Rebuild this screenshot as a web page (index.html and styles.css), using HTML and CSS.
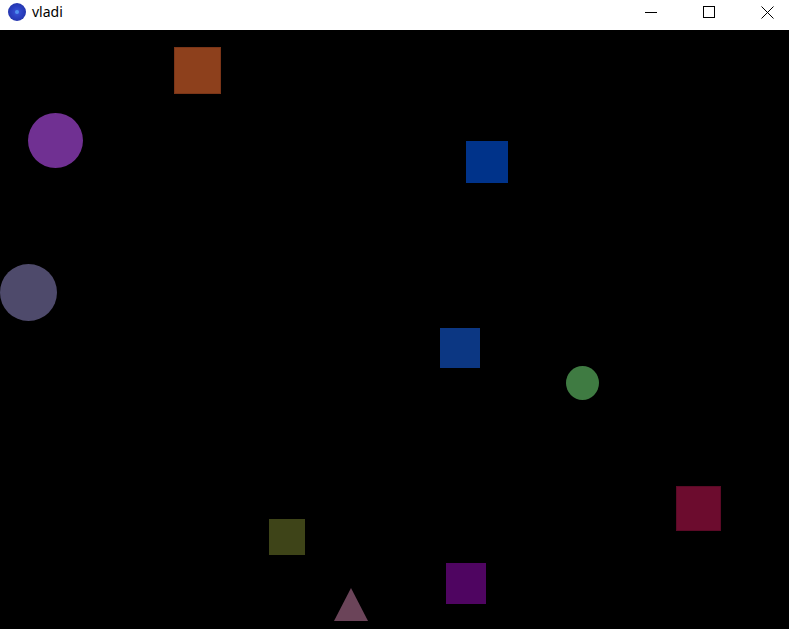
FILE: index.html
```html
<!DOCTYPE html>
<html>
<head>
<meta charset="utf-8">
<title>vladi</title>
<link rel="stylesheet" href="styles.css">
</head>
<body>
<div class="window">
  <header class="titlebar">
    <div class="app">
      <span class="app-icon"><span class="app-dot"></span></span>
      <span class="app-title">vladi</span>
    </div>
    <div class="controls">
      <span class="ctl">
        <svg width="12" height="12" viewBox="0 0 12 12"><path d="M0 6.5h12" stroke="#000" stroke-width="1"/></svg>
      </span>
      <span class="ctl">
        <svg width="12" height="12" viewBox="0 0 12 12"><rect x="0.5" y="0.5" width="11" height="11" fill="none" stroke="#000" stroke-width="1"/></svg>
      </span>
      <span class="ctl">
        <svg width="13" height="13" viewBox="0 0 13 13"><path d="M0.5 0.5L12.5 12.5M12.5 0.5L0.5 12.5" stroke="#000" stroke-width="1"/></svg>
      </span>
    </div>
  </header>
  <main class="canvas">
    <div class="shape sq orange"></div>
    <div class="shape circ purple"></div>
    <div class="shape sq blue1"></div>
    <div class="shape circ slate"></div>
    <div class="shape sq blue2"></div>
    <div class="shape circ green"></div>
    <div class="shape sq red"></div>
    <div class="shape sq olive"></div>
    <div class="shape sq violet"></div>
    <svg class="shape tri" width="34" height="33" viewBox="0 0 34 33"><polygon points="17,0 34,33 0,33" fill="#6b4459"/></svg>
  </main>
</div>
</body>
</html>
```
FILE: styles.css
```css
html, body {
  margin: 0;
  padding: 0;
  height: 100%;
  background: #000;
}
.window {
  display: flex;
  flex-direction: column;
  width: 789px;
  height: 629px;
  overflow: hidden;
}
.titlebar {
  height: 30px;
  flex: 0 0 30px;
  background: #fff;
  display: flex;
  align-items: center;
  justify-content: space-between;
}
.app {
  display: flex;
  align-items: center;
  padding-left: 8px;
  gap: 6px;
  margin-top: -6px;
}
.app-icon {
  width: 18px;
  height: 18px;
  border-radius: 50%;
  background: radial-gradient(circle at 50% 50%, #3a55d8 0, #2a3fc0 45%, #1f2c9a 100%);
  display: flex;
  align-items: center;
  justify-content: center;
}
.app-dot {
  width: 4px;
  height: 4px;
  border-radius: 50%;
  background: #4f8ff0;
}
.app-title {
  font-family: "Noto Sans", "Open Sans", sans-serif;
  font-size: 14px;
  color: #000;
  line-height: 18px;
}
.controls {
  display: flex;
  align-self: stretch;
  margin-top: -6px;
}
.ctl {
  width: 58px;
  box-sizing: border-box;
  padding-left: 30px;
  display: flex;
  align-items: center;
  justify-content: flex-start;
}
.ctl svg { display: block; }
.canvas {
  flex: 1;
  position: relative;
  background: #000;
}
.shape { position: absolute; }
.circ { border-radius: 50%; }
.orange { left: 174px; top: 17px; width: 47px; height: 47px; background: #8d401c; box-shadow: inset 0 0 0 1px #7a3518; }
.purple { left: 28px; top: 83px; width: 55px; height: 55px; background: #703092; }
.blue1 { left: 466px; top: 111px; width: 42px; height: 42px; background: #00338a; }
.slate { left: 0; top: 234px; width: 57px; height: 57px; background: #4e4a6b; }
.blue2 { left: 440px; top: 298px; width: 40px; height: 40px; background: #0c3783; }
.green { left: 566px; top: 336px; width: 33px; height: 34px; background: #3f7b42; }
.red { left: 676px; top: 456px; width: 45px; height: 45px; background: #6c0c2e; box-shadow: inset 0 0 0 1px #5a0a26; }
.olive { left: 269px; top: 489px; width: 36px; height: 36px; background: #3e4418; }
.violet { left: 446px; top: 533px; width: 40px; height: 41px; background: #4f0561; }
.tri { left: 334px; top: 558px; }
```
